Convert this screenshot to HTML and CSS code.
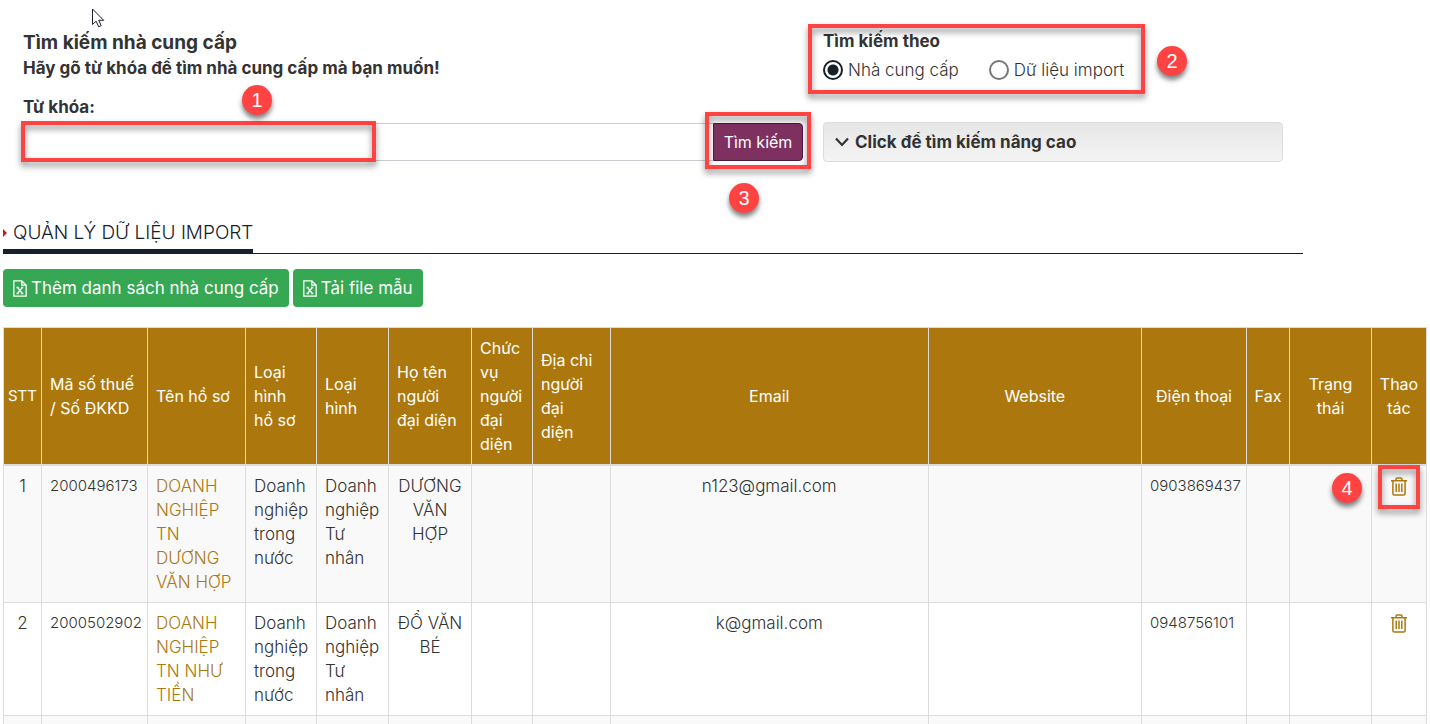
FILE: index.html
```html
<!DOCTYPE html>
<html lang="vi">
<head>
<meta charset="utf-8">
<title>Quản lý dữ liệu import</title>
<link rel="stylesheet" href="styles.css">
</head>
<body>
<svg class="cursor" width="13" height="20" viewBox="0 0 13 20" aria-hidden="true"><path d="M.5 1v15.5l3.600-3.300 2.600 5.600 2.500-1.200-2.500-5.300h5z" fill="#fff" stroke="#1b1b2b"/></svg>

<section class="search">
  <form class="search-main">
    <h1 class="search-title">Tìm kiếm nhà cung cấp</h1>
    <p class="search-lead">Hãy gõ từ khóa để tìm nhà cung cấp mà bạn muốn!</p>
    <label class="field-label" for="keyword">Từ khóa:</label>
    <div class="search-row">
      <input class="keyword" id="keyword" type="text">
      <span class="submit-wrap">
        <button class="submit" type="button">Tìm kiếm</button>
        <span class="mark mark-submit"></span>
        <span class="badge badge-submit">3</span>
      </span>
      <span class="mark mark-keyword"></span>
      <span class="badge badge-keyword">1</span>
    </div>
  </form>
  <div class="search-side">
    <fieldset class="scope">
      <legend class="scope-title">Tìm kiếm theo</legend>
      <div class="scope-options">
        <label class="option"><input class="radio" type="radio" name="scope" checked>Nhà cung cấp</label>
        <label class="option"><input class="radio" type="radio" name="scope">Dữ liệu import</label>
      </div>
    </fieldset>
    <span class="mark mark-scope"></span>
    <span class="badge badge-scope">2</span>
    <button class="advanced" type="button">
      <svg width="14" height="10" viewBox="0 0 14 10" aria-hidden="true"><path d="M1 1.500L7 8l6-6.500" fill="none" stroke="#333" stroke-width="2.200"/></svg>
      Click để tìm kiếm nâng cao
    </button>
  </div>
</section>

<div class="heading"><h2 class="heading-text"><svg class="heading-arrow" width="5" height="8" viewBox="0 0 5 8" aria-hidden="true"><path d="M0 0l4 4-4 4z" fill="#d0161b"/></svg>QUẢN LÝ DỮ LIỆU IMPORT</h2></div>

<div class="actions">
  <button class="action" type="button"><svg class="file-icon" width="14" height="17" viewBox="0 0 14 17" aria-hidden="true"><path d="M.8.8h8l4.400 4.400v11H.8zM8.800.8v4.400h4.400M4.500 7.500l4.800 6M9.300 7.500l-4.800 6M3.500 7.500h2.300M8 7.500h2.300M3.500 13.500h2.300M8 13.500h2.300" fill="none" stroke="#fff" stroke-width="1.300"/></svg>Thêm danh sách nhà cung cấp</button>
  <button class="action" type="button"><svg class="file-icon" width="14" height="17" viewBox="0 0 14 17" aria-hidden="true"><path d="M.8.8h8l4.400 4.400v11H.8zM8.800.8v4.400h4.400M4.500 7.500l4.800 6M9.300 7.500l-4.800 6M3.500 7.500h2.300M8 7.500h2.300M3.500 13.500h2.300M8 13.500h2.300" fill="none" stroke="#fff" stroke-width="1.300"/></svg>Tải file mẫu</button>
</div>

<table class="suppliers">
  <colgroup>
    <col class="c-stt"><col class="c-tax"><col class="c-name"><col class="c-kind"><col class="c-type"><col class="c-rep"><col class="c-role"><col class="c-addr"><col><col class="c-web"><col class="c-phone"><col class="c-fax"><col class="c-state"><col class="c-act">
  </colgroup>
  <thead>
    <tr>
      <th class="center num">STT</th><th>Mã số thuế<br>/ Số ĐKKD</th><th>Tên hồ sơ</th><th>Loại<br>hình<br>hồ sơ</th><th>Loại<br>hình</th><th>Họ tên<br>người<br>đại diện</th><th>Chức<br>vụ<br>người<br>đại<br>diện</th><th>Địa chỉ<br>người<br>đại<br>diện</th><th class="center">Email</th><th class="center">Website</th><th class="center">Điện thoại</th><th class="center">Fax</th><th class="center">Trạng<br>thái</th><th class="center">Thao<br>tác</th>
    </tr>
  </thead>
  <tbody>
    <tr>
      <td class="center">1</td><td class="num">2000496173</td>
      <td><a class="link" href="#">DOANH<br>NGHIỆP<br>TN<br>DƯƠNG<br>VĂN HỢP</a></td>
      <td>Doanh<br>nghiệp<br>trong<br>nước</td><td>Doanh<br>nghiệp<br>Tư<br>nhân</td>
      <td class="center">DƯƠNG<br>VĂN<br>HỢP</td><td></td><td></td>
      <td class="center">n123@gmail.com</td><td></td><td class="num">0903869437</td><td></td><td></td>
      <td class="center"><span class="delete-wrap"><button class="delete" type="button" aria-label="Xóa"><svg width="16" height="19" viewBox="0 0 16 19" aria-hidden="true"><path d="M0 3.700h16M5 3.700V2.200Q5 .9 6.300.9h3.400q1.300 0 1.300 1.300v1.500M1.900 3.700v12.800q0 1.500 1.500 1.500h9.200q1.500 0 1.500-1.500V3.700M5.200 6.500v8.500M8 6.500v8.500M10.800 6.500v8.500" fill="none" stroke="#ac780e" stroke-width="1.500"/></svg></button><span class="mark mark-delete"></span><span class="badge badge-delete">4</span></span></td>
    </tr>
    <tr>
      <td class="center">2</td><td class="num">2000502902</td>
      <td><a class="link" href="#">DOANH<br>NGHIỆP<br>TN NHƯ<br>TIỀN</a></td>
      <td>Doanh<br>nghiệp<br>trong<br>nước</td><td>Doanh<br>nghiệp<br>Tư<br>nhân</td>
      <td class="center">ĐỔ VĂN<br>BÉ</td><td></td><td></td>
      <td class="center">k@gmail.com</td><td></td><td class="num">0948756101</td><td></td><td></td>
      <td class="center"><span class="delete-wrap"><button class="delete" type="button" aria-label="Xóa"><svg width="16" height="19" viewBox="0 0 16 19" aria-hidden="true"><path d="M0 3.700h16M5 3.700V2.200Q5 .9 6.300.9h3.400q1.300 0 1.300 1.300v1.500M1.900 3.700v12.800q0 1.500 1.500 1.500h9.200q1.500 0 1.500-1.500V3.700M5.200 6.500v8.500M8 6.500v8.500M10.800 6.500v8.500" fill="none" stroke="#ac780e" stroke-width="1.500"/></svg></button></span></td>
    </tr>
    <tr><td></td><td></td><td></td><td></td><td></td><td></td><td></td><td></td><td></td><td></td><td></td><td></td><td></td><td></td></tr>
  </tbody>
</table>
</body>
</html>
```
FILE: styles.css
```css
* { box-sizing: border-box; }
html { overflow: hidden; }
body {
  margin: 0;
  padding: 31px 3px 0;
  background: #fff;
  color: #333;
  font: 300 17px/24px Inter, "Open Sans", sans-serif;
}
button, input { font: inherit; color: inherit; }
h1, h2, p { margin: 0; }

.cursor { position: absolute; left: 92px; top: 8px; }

/* search panel */
.search {
  display: grid;
  grid-template-columns: 39fr 23fr;
  gap: 20px;
  max-width: 1300px;
  padding: 0 20px;
}
.search-title { font-size: 19px; font-weight: 700; line-height: 24px; }
.search-lead { font-weight: 700; line-height: 26px; }
.field-label { display: block; margin: 14px 0 4px; font-weight: 700; }
.search-row { position: relative; display: flex; }
.keyword {
  flex: 1;
  min-width: 0;
  height: 38px;
  padding: 0 12px;
  border: 1px solid #c8ccd0;
  border-right: 0;
  border-radius: 4px 0 0 4px;
  background: #fff;
}
.submit-wrap { position: relative; display: flex; }
.submit {
  width: 90px;
  height: 38px;
  padding: 0;
  border: 1px solid #4d1a3c;
  border-radius: 0 4px 4px 0;
  background: #7e3060;
  color: #fff;
  font-size: 16px;
  font-weight: 400;
}
.search-side { position: relative; }
.scope { min-width: 0; margin: 0 0 40px; padding: 0; border: 0; }
.scope-title { padding: 0; font-weight: 700; line-height: 21px; }
.scope-options { display: flex; gap: 30px; padding-top: 6px; }
.option { display: flex; align-items: center; gap: 5px; }
.radio {
  appearance: none;
  width: 20px;
  height: 20px;
  margin: 0;
  border: 2px solid #777;
  border-radius: 50%;
  background: #fff;
}
.radio:checked { border-color: #15202b; background: radial-gradient(circle, #15202b 5px, #fff 6px); }
.advanced {
  display: flex;
  align-items: center;
  gap: 6px;
  width: 100%;
  height: 40px;
  padding: 0 11px;
  border: 1px solid #dcdcdc;
  border-radius: 4px;
  background: linear-gradient(#e6e6e6, #f4f4f4);
  font-weight: 700;
  text-align: left;
}

/* section heading */
.heading { display: flex; max-width: 1300px; margin-top: 55px; border-bottom: 1px solid #15202b; }
.heading-text {
  display: flex;
  align-items: center;
  gap: 5px;
  margin-bottom: -1px;
  border-bottom: 5px solid #15202b;
  color: #15202b;
  font-size: 19px;
  font-weight: 300;
  line-height: 32px;
}

.actions { display: flex; gap: 4px; margin: 15px 0 20px; }
.action {
  display: flex;
  align-items: center;
  gap: 4px;
  height: 38px;
  padding: 0 10px;
  border: 0;
  border-radius: 4px;
  background: #36a853;
  color: #fff;
  font-weight: 400;
}

/* table */
.suppliers { width: 100%; table-layout: fixed; border-collapse: collapse; }
.c-stt { width: 38px; }
.c-tax { width: 106px; }
.c-name { width: 98px; }
.c-kind { width: 71px; }
.c-type { width: 72px; }
.c-rep { width: 83px; }
.c-role { width: 61px; }
.c-addr { width: 78px; }
.c-web { width: 15%; }
.c-phone { width: 105px; }
.c-fax { width: 43px; }
.c-state { width: 82px; }
.c-act { width: 55px; }
.suppliers th, .suppliers td {
  padding: 8px;
  border: 1px solid #dcdcdc;
  text-align: left;
  vertical-align: top;
  white-space: nowrap;
}
.suppliers th {
  border-bottom-width: 2px;
  background: #ac780e;
  color: #fff;
  font-size: 16px;
  font-weight: 400;
  vertical-align: middle;
}
.suppliers tbody tr:nth-child(odd) { background: #f9f9f9; }
.suppliers .center { padding-left: 0; padding-right: 0; text-align: center; }
.suppliers .num { font-size: 15px; }
.link { color: #ac780e; text-decoration: none; }
.delete-wrap { position: relative; display: inline-flex; vertical-align: top; }
.delete { display: flex; align-items: center; width: 16px; height: 24px; padding: 0; border: 0; background: none; }

/* numbered callouts */
.mark {
  position: absolute;
  border: 4px solid #ff4343;
  filter: drop-shadow(0 4px 3px rgba(0, 0, 0, .45));
  pointer-events: none;
}
.badge {
  position: absolute;
  width: 30px;
  height: 30px;
  border-radius: 50%;
  background: #ff4343;
  box-shadow: 0 4px 5px rgba(0, 0, 0, .5);
  color: #fff;
  font: 20px/30px "Liberation Sans", sans-serif;
  text-align: center;
}
.mark-keyword { left: -2px; top: -2px; width: 355px; height: 41px; }
.badge-keyword { left: 219px; top: -38px; }
.mark-scope { left: -15px; top: -7px; width: 337px; height: 70px; }
.badge-scope { left: 334px; top: 15px; }
.mark-submit { left: -8px; top: -11px; width: 106px; height: 57px; }
.badge-submit { left: 16px; top: 60px; }
.mark-delete { left: -13px; top: -9px; width: 42px; height: 44px; }
.badge-delete { left: -59px; top: -1px; }
```
